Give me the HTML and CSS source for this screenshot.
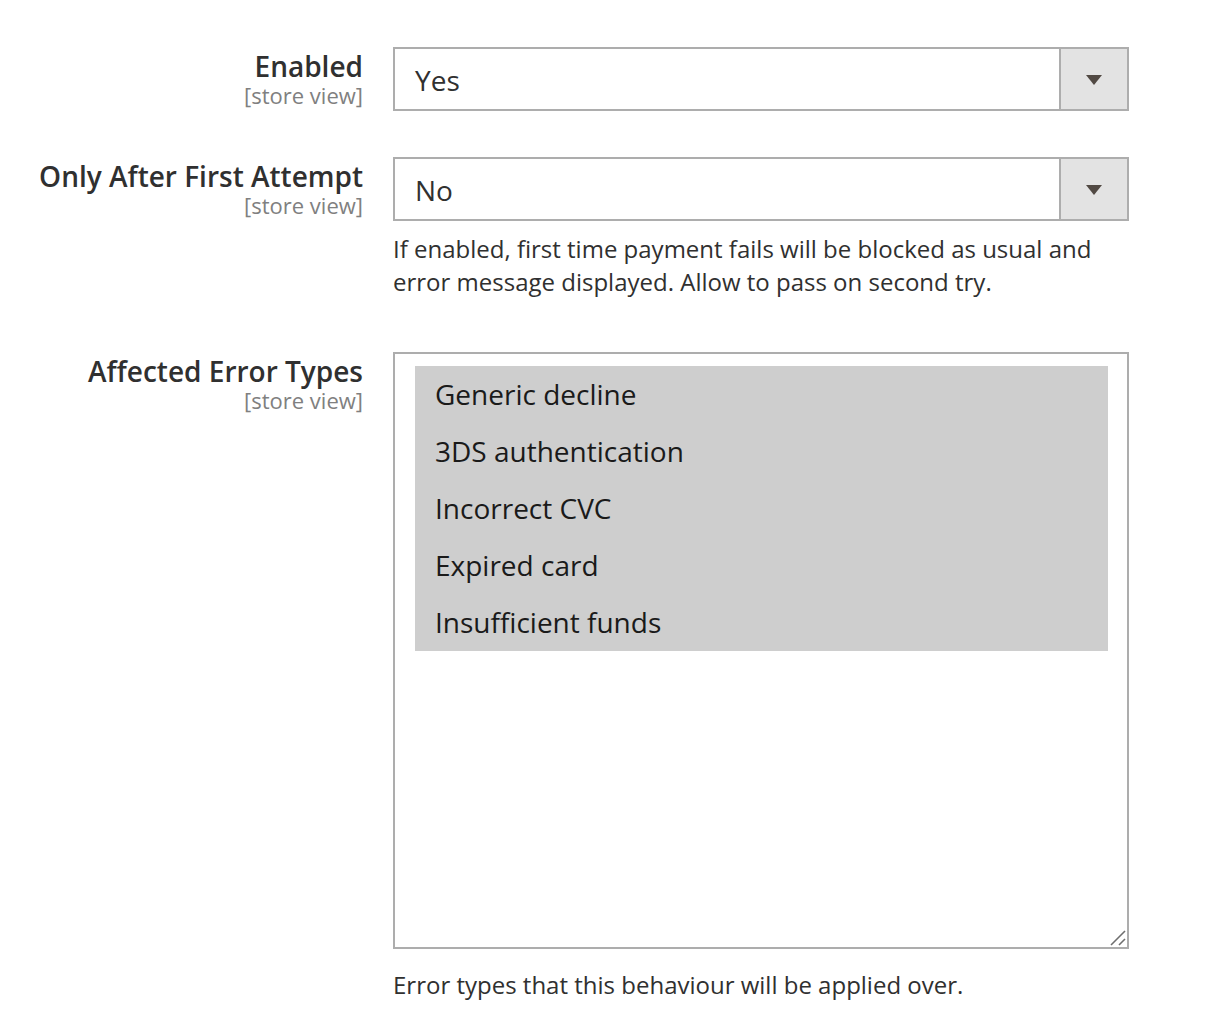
FILE: index.html
```html
<!DOCTYPE html>
<html lang="en">
<head>
<meta charset="utf-8">
<title>Config</title>
<link rel="stylesheet" href="styles.css">
</head>
<body>
<div class="form">
  <div class="row row-first">
    <div class="label">
      <span class="label-text">Enabled</span>
      <span class="scope">[store view]</span>
    </div>
    <div class="control">
      <div class="select">
        <span class="select-value">Yes</span>
        <span class="select-arrow"><span class="tri"></span></span>
      </div>
    </div>
  </div>
  <div class="row row-second">
    <div class="label">
      <span class="label-text">Only After First Attempt</span>
      <span class="scope">[store view]</span>
    </div>
    <div class="control">
      <div class="select">
        <span class="select-value">No</span>
        <span class="select-arrow"><span class="tri"></span></span>
      </div>
      <p class="note">If enabled, first time payment fails will be blocked as usual and error message displayed. Allow to pass on second try.</p>
    </div>
  </div>
  <div class="row row-third">
    <div class="label">
      <span class="label-text">Affected Error Types</span>
      <span class="scope">[store view]</span>
    </div>
    <div class="control">
      <div class="multiselect">
        <ul class="options">
          <li class="option">Generic decline</li>
          <li class="option">3DS authentication</li>
          <li class="option">Incorrect CVC</li>
          <li class="option">Expired card</li>
          <li class="option">Insufficient funds</li>
        </ul>
        <svg class="resize" width="16" height="16" viewBox="0 0 16 16">
          <line x1="1" y1="15" x2="15" y2="1" stroke="#6f6f6f" stroke-width="1.6"/>
          <line x1="9" y1="15" x2="15" y2="9" stroke="#6f6f6f" stroke-width="1.6"/>
        </svg>
      </div>
      <p class="note note-bottom">Error types that this behaviour will be applied over.</p>
    </div>
  </div>
</div>
</body>
</html>
```

FILE: styles.css
```css
html, body {
  margin: 0;
  padding: 0;
  background: #ffffff;
}

body {
  font-family: "Open Sans", "Noto Sans", sans-serif;
  color: #303030;
}

.form {
  padding-top: 47px;
}

.row {
  display: grid;
  grid-template-columns: 363px 736px;
  column-gap: 30px;
  align-items: start;
}

.row-second {
  margin-top: 46px;
}

.row-third {
  margin-top: 54px;
}

.label {
  display: flex;
  flex-direction: column;
  align-items: flex-end;
  text-align: right;
  padding-top: 1px;
}

.label-text {
  font-size: 28px;
  font-weight: 600;
  line-height: 36px;
  color: #303030;
}

.scope {
  font-size: 22px;
  line-height: 22px;
  color: #808080;
}

.control {
  display: flex;
  flex-direction: column;
}

.select {
  display: flex;
  height: 64px;
  box-sizing: border-box;
  border: 2px solid #adadad;
  background: #ffffff;
}

.select-value {
  flex: 1;
  display: flex;
  align-items: center;
  padding: 2px 20px 0 20px;
  font-size: 28px;
  color: #303030;
}

.select-arrow {
  width: 68px;
  box-sizing: border-box;
  border-left: 2px solid #adadad;
  background: #e3e3e3;
  display: flex;
  align-items: center;
  justify-content: center;
}

.tri {
  width: 0;
  height: 0;
  border-left: 8px solid transparent;
  border-right: 8px solid transparent;
  border-top: 10px solid #514943;
  margin-top: 2px;
}

.note {
  margin: 11px 0 0 0;
  font-size: 24px;
  line-height: 33px;
  color: #303030;
}

.note-bottom {
  margin-top: 19px;
}

.multiselect {
  position: relative;
  height: 597px;
  box-sizing: border-box;
  border: 2px solid #adadad;
  padding: 12px 19px 0 20px;
  background: #ffffff;
}

.options {
  list-style: none;
  margin: 0;
  padding: 0;
  background: #cecece;
}

.option {
  height: 57px;
  box-sizing: border-box;
  padding: 0 20px 2px 20px;
  display: flex;
  align-items: center;
  font-size: 28px;
  color: #1a1a1a;
}

.resize {
  position: absolute;
  right: 1px;
  bottom: 1px;
}
```
